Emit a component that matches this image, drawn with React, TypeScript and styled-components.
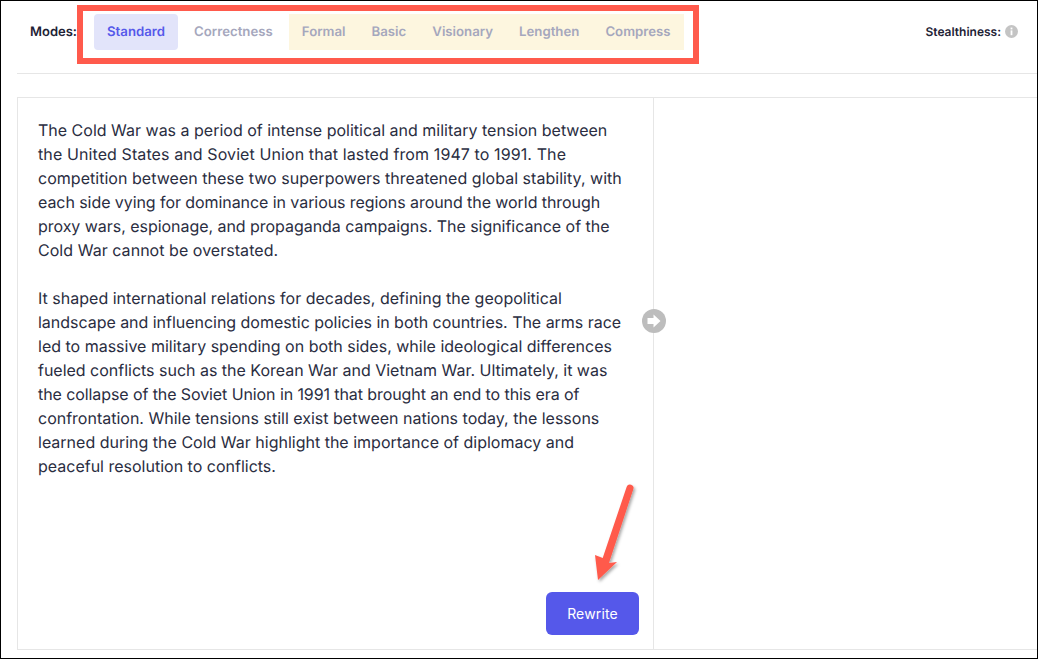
import styled, { createGlobalStyle } from 'styled-components';

const GlobalStyle = createGlobalStyle`
  html, body {
    margin: 0;
    padding: 0;
    background: #fff;
  }
  * {
    box-sizing: border-box;
  }
`;

const Frame = styled.div`
  position: relative;
  width: 1038px;
  height: 659px;
  border: 1px solid #000;
  background: #fff;
  overflow: hidden;
  font-family: Inter, 'Noto Sans', sans-serif;
  text-rendering: geometricPrecision;
  color: #1e2235;
`;

const Toolbar = styled.div`
  display: flex;
  align-items: center;
  justify-content: space-between;
  height: 73px;
  margin-left: 16px;
  padding: 13px 19px 23px 13px;
  border-bottom: 1px solid #e6e6e6;
`;

const ModesRow = styled.div`
  display: flex;
  align-items: center;
`;

const Label = styled.span`
  width: 64px;
  font-size: 13px;
  font-weight: 600;
`;

const TabGroup = styled.div`
  display: flex;
  margin-left: 3px;
  background: #fdf6df;
`;

const Tab = styled.div<{ $active?: boolean }>`
  height: 36px;
  padding: 0 13px;
  display: flex;
  align-items: center;
  font-size: 13.22px;
  font-weight: 600;
  border-radius: 4px;
  color: ${p => (p.$active ? '#5558ea' : '#a5a7bd')};
  background: ${p => (p.$active ? '#e2e4fa' : 'transparent')};
`;

const PlainTab = styled(Tab)`
  margin-left: 3px;
`;

const Stealth = styled.div`
  display: flex;
  align-items: center;
  gap: 4px;
  padding-bottom: 2px;
  font-size: 12px;
  font-weight: 600;
`;

const InfoDot = styled.span`
  display: flex;
  color: #c4c4c4;
`;

const Editor = styled.div`
  display: flex;
  height: 553px;
  margin: 23px -20px 0 16px;
  border: 1px solid #e6e6e6;
`;

const InputPane = styled.div`
  position: relative;
  flex: 0 0 636px;
  display: flex;
  flex-direction: column;
  align-items: flex-end;
  justify-content: space-between;
  padding: 20px 14px 14px 20px;
  border-right: 1px solid #e6e6e6;
`;

const Copy = styled.div`
  width: 100%;
  font-size: 16px;
  line-height: 24px;
  color: #2a2d41;
`;

const Paragraph = styled.div`
  margin-bottom: 24px;
`;

// the reference's Inter build runs a bit wider or narrower line by line
const Line = styled.div<{ $tracking: number }>`
  white-space: nowrap;
  letter-spacing: ${p => p.$tracking}px;
`;

const RewriteButton = styled.button`
  width: 93px;
  height: 43px;
  border: 0;
  border-radius: 6px;
  background: #5558ea;
  color: #fff;
  font-family: inherit;
  font-size: 14px;
  font-weight: 400;
  letter-spacing: 0.15px;
`;

const RunDot = styled.span`
  position: absolute;
  top: 211px;
  right: -13px;
  display: flex;
`;

const OutputPane = styled.div`
  flex: 1;
`;

const Highlight = styled.div`
  position: absolute;
  left: 76px;
  top: 4px;
  width: 622px;
  height: 59px;
  border: 6px solid #ff5a4c;
`;

const Arrow = styled.svg`
  position: absolute;
  left: 585px;
  top: 478px;
  overflow: visible;
`;

const PARAGRAPHS: [string, number][][] = [
  [
    ['The Cold War was a period of intense political and military tension between', 0],
    ['the United States and Soviet Union that lasted from 1947 to 1991. The', 0.1],
    ['competition between these two superpowers threatened global stability, with', 0.03],
    ['each side vying for dominance in various regions around the world through', -0.07],
    ['proxy wars, espionage, and propaganda campaigns. The significance of the', -0.04],
    ['Cold War cannot be overstated.', 0.04],
  ],
  [
    ['It shaped international relations for decades, defining the geopolitical', 0.014],
    ['landscape and influencing domestic policies in both countries. The arms race', -0.03],
    ['led to massive military spending on both sides, while ideological differences', 0],
    ['fueled conflicts such as the Korean War and Vietnam War. Ultimately, it was', -0.013],
    ['the collapse of the Soviet Union in 1991 that brought an end to this era of', -0.09],
    ['confrontation. While tensions still exist between nations today, the lessons', 0],
    ['learned during the Cold War highlight the importance of diplomacy and', 0],
    ['peaceful resolution to conflicts.', 0],
  ],
];

const YELLOW_MODES = ['Formal', 'Basic', 'Visionary', 'Lengthen', 'Compress'];

export default function App() {
  return (
    <>
      <GlobalStyle />
      <Frame>
        <Toolbar>
          <ModesRow>
            <Label>Modes:</Label>
            <Tab $active>Standard</Tab>
            <PlainTab>Correctness</PlainTab>
            <TabGroup>
              {YELLOW_MODES.map(m => (
                <Tab key={m}>{m}</Tab>
              ))}
            </TabGroup>
          </ModesRow>
          <Stealth>
            Stealthiness:
            <InfoDot>
              <svg width="13" height="13" viewBox="0 0 13 13">
                <circle cx="6.5" cy="6.5" r="6.5" fill="currentColor" />
                <rect x="5.6" y="2.6" width="1.8" height="1.8" fill="#fff" />
                <rect x="5.6" y="5.4" width="1.8" height="4.8" fill="#fff" />
              </svg>
            </InfoDot>
          </Stealth>
        </Toolbar>
        <Editor>
          <InputPane>
            <Copy>
              {PARAGRAPHS.map((lines, i) => (
                <Paragraph key={i}>
                  {lines.map(([text, tracking]) => (
                    <Line key={text} $tracking={tracking}>
                      {text}
                    </Line>
                  ))}
                </Paragraph>
              ))}
            </Copy>
            <RewriteButton>Rewrite</RewriteButton>
            <RunDot>
              <svg width="24" height="24" viewBox="0 0 24 24">
                <circle cx="12" cy="12" r="12" fill="#bdbdbd" />
                <path d="M5.5 9h6V5.6l7 6.4-7 6.4V15h-6z" fill="#fff" />
              </svg>
            </RunDot>
          </InputPane>
          <OutputPane />
        </Editor>
        <Highlight />
        <Arrow width="60" height="110" viewBox="0 0 60 110">
          <defs>
            <filter id="arrowShadow" x="-50%" y="-50%" width="200%" height="200%">
              <feDropShadow dx="1.5" dy="2" stdDeviation="1.5" floodColor="#000" floodOpacity="0.35" />
            </filter>
          </defs>
          <path
            d="M40.7 7.8A3.5 3.5 0 0 1 47.3 10.2L23 84L31 83L12 101L9 76L16.7 79Z"
            fill="#ff5a4c"
            filter="url(#arrowShadow)"
          />
        </Arrow>
      </Frame>
    </>
  );
}
